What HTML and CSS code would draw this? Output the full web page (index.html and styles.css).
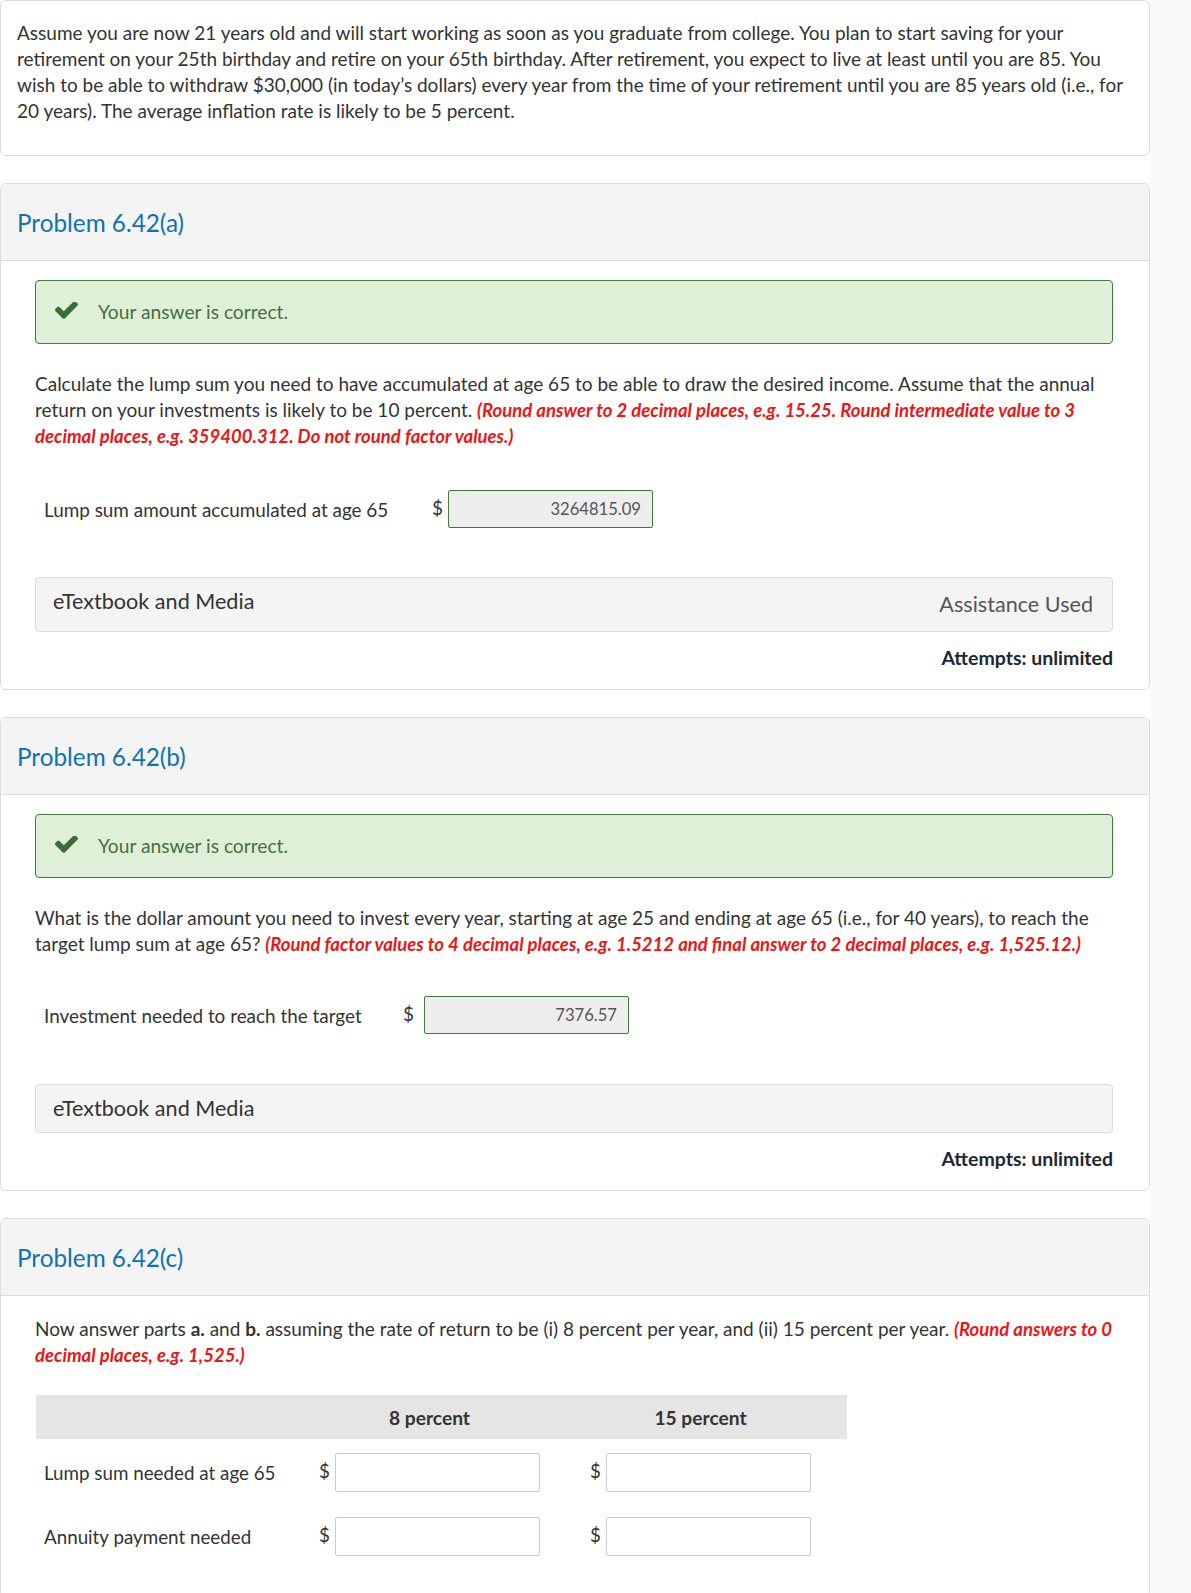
FILE: index.html
```html
<!DOCTYPE html>
<html lang="en">
<head>
<meta charset="utf-8">
<title>Problem 6.42</title>
<link rel="stylesheet" href="styles.css">
</head>
<body>
<div class="page">

  <section class="card intro">
    <p class="text">Assume you are now 21 years old and will start working as soon as you graduate from college. You plan to start saving for your retirement on your 25th birthday and retire on your 65th birthday. After retirement, you expect to live at least until you are 85. You wish to be able to withdraw $30,000 (in today’s dollars) every year from the time of your retirement until you are 85 years old (i.e., for 20 years). The average inflation rate is likely to be 5 percent.</p>
  </section>

  <section class="card">
    <header class="card-head"><h2 class="title">Problem 6.42(a)</h2></header>
    <div class="card-body">
      <div class="success">
        <svg class="check" viewBox="125 400 1546 1125" width="23" height="17" aria-hidden="true"><path fill="#3b6e36" d="M1671 566q0 40-28 68l-724 724-136 136q-28 28-68 28t-68-28l-136-136-362-362q-28-28-28-68t28-68l136-136q28-28 68-28t68 28l294 295 656-657q28-28 68-28t68 28l136 136q28 28 28 68z"/></svg>
        <span>Your answer is correct.</span>
      </div>
      <p class="text question">Calculate the lump sum you need to have accumulated at age 65 to be able to draw the desired income. Assume that the annual return on your investments is likely to be 10 percent. <em class="hint">(Round answer to 2 decimal places, e.g. 15.25. Round intermediate value to 3 decimal places, e.g. 359400.312. Do not round factor values.)</em></p>
      <div class="answer-row row-a">
        <span class="label">Lump sum amount accumulated at age 65</span>
        <span class="dollar">$</span>
        <input class="field answered" type="text" value="3264815.09" readonly>
      </div>
      <div class="media media-tall">
        <span class="media-title">eTextbook and Media</span>
        <span class="assist">Assistance Used</span>
      </div>
      <div class="attempts">Attempts: unlimited</div>
    </div>
  </section>

  <section class="card">
    <header class="card-head"><h2 class="title">Problem 6.42(b)</h2></header>
    <div class="card-body">
      <div class="success">
        <svg class="check" viewBox="125 400 1546 1125" width="23" height="17" aria-hidden="true"><path fill="#3b6e36" d="M1671 566q0 40-28 68l-724 724-136 136q-28 28-68 28t-68-28l-136-136-362-362q-28-28-28-68t28-68l136-136q28-28 68-28t68 28l294 295 656-657q28-28 68-28t68 28l136 136q28 28 28 68z"/></svg>
        <span>Your answer is correct.</span>
      </div>
      <p class="text question">What is the dollar amount you need to invest every year, starting at age 25 and ending at age 65 (i.e., for 40 years), to reach the target lump sum at age 65? <em class="hint">(Round factor values to 4 decimal places, e.g. 1.5212 and final answer to 2 decimal places, e.g. 1,525.12.)</em></p>
      <div class="answer-row row-b">
        <span class="label">Investment needed to reach the target</span>
        <span class="dollar">$</span>
        <input class="field answered" type="text" value="7376.57" readonly>
      </div>
      <div class="media media-short">
        <span class="media-title">eTextbook and Media</span>
      </div>
      <div class="attempts">Attempts: unlimited</div>
    </div>
  </section>

  <section class="card last">
    <header class="card-head"><h2 class="title">Problem 6.42(c)</h2></header>
    <div class="card-body body-c">
      <p class="text">Now answer parts <b>a.</b> and <b>b.</b> assuming the rate of return to be (i) 8 percent per year, and (ii) 15 percent per year. <em class="hint">(Round answers to 0 decimal places, e.g. 1,525.)</em></p>
      <div class="grid-table">
        <div class="grid-head">
          <span></span>
          <span class="col-title">8 percent</span>
          <span class="col-title">15 percent</span>
        </div>
        <div class="grid-row first-row">
          <span class="grid-label">Lump sum needed at age 65</span>
          <span class="cell"><span class="dollar-c">$</span><input class="field empty" type="text"></span>
          <span class="cell"><span class="dollar-c">$</span><input class="field empty" type="text"></span>
        </div>
        <div class="grid-row">
          <span class="grid-label">Annuity payment needed</span>
          <span class="cell"><span class="dollar-c">$</span><input class="field empty" type="text"></span>
          <span class="cell"><span class="dollar-c">$</span><input class="field empty" type="text"></span>
        </div>
      </div>
    </div>
  </section>

</div>
</body>
</html>
```

FILE: styles.css
```css
* { box-sizing: border-box; }

html, body {
  margin: 0;
  padding: 0;
}

body {
  background: #fafafa;
  font-family: Lato, "Open Sans", "Liberation Sans", sans-serif;
  color: #333;
}

.page {
  width: 1150px;
  min-height: 1593px;
  background: #fff;
  overflow: hidden;
}

.card {
  border: 1px solid #dcdcdc;
  border-radius: 6px;
  background: #fff;
  margin-bottom: 27px;
  overflow: hidden;
}

.intro {
  padding: 19px 17px 31px 16px;
  margin-bottom: 27px;
}

.text {
  margin: 0;
  font-size: 19px;
  line-height: 26px;
  color: #333;
}

.card-head {
  background: #f4f4f4;
  border-bottom: 1px solid #dcdcdc;
  padding: 24px 17px 22px 16px;
}

.title {
  margin: 0;
  font-size: 24.3px;
  line-height: 30px;
  font-weight: 400;
  color: #1172b2;
}

.card-body {
  padding: 19px 36px 18px 34px;
}

.success {
  display: flex;
  align-items: center;
  gap: 20px;
  height: 64px;
  padding: 0 18px 0 19px;
  background: #dff0d8;
  border: 1px solid #3f7a3c;
  border-radius: 4px;
  font-size: 19.2px;
  line-height: 26px;
  color: #44703f;
}

.check { flex: none; margin-top: -3px; }

.question { margin-top: 27px; }

.hint {
  color: #ec1616;
  font-weight: 700;
  font-style: italic;
  font-size: 0.975em;
}

.answer-row {
  display: flex;
  align-items: center;
  height: 38px;
  font-size: 18.9px;
}

.row-a { margin-top: 41px; }
.row-b { margin-top: 39px; }

.label {
  padding-left: 9px;
  flex: none;
}

.row-a .label { width: 397px; }
.row-b .label { width: 368px; }

.dollar {
  flex: none;
  margin-top: -4px;
}

.row-a .dollar { width: 16px; }
.row-b .dollar { width: 21px; }

.field {
  width: 205px;
  height: 38px;
  font-family: inherit;
  font-size: 16.6px;
  color: #555;
  text-align: right;
  padding: 0 11px;
  border-radius: 2px;
  outline: none;
}

.answered {
  background: #eee;
  border: 1px solid #3f7a3c;
}

.empty {
  background: #fff;
  border: 1px solid #ccc;
  height: 39px;
}

.media {
  display: flex;
  justify-content: space-between;
  align-items: flex-start;
  background: #f4f4f4;
  border: 1px solid #dcdcdc;
  border-radius: 4px;
  padding: 0 19px 0 17px;
  font-size: 21.6px;
  line-height: 25px;
}

.media-tall { margin-top: 49px; height: 55px; }
.media-short { margin-top: 50px; height: 49px; }

.media-title {
  color: #333;
  padding-top: 11px;
}

.assist {
  color: #555;
  padding-top: 14px;
}

.attempts {
  margin-top: 13px;
  text-align: right;
  font-size: 19.5px;
  line-height: 26px;
  font-weight: 700;
  color: #1d2833;
}

.body-c {
  padding-top: 20px;
  padding-bottom: 40px;
}

.grid-table {
  width: 811px;
  margin-top: 27px;
  margin-left: 1px;
}

.grid-head,
.grid-row {
  display: grid;
  grid-template-columns: 258px 271px 271px;
  padding-right: 11px;
  align-items: center;
}

.grid-head {
  height: 44px;
  background: #e5e5e5;
}

.col-title {
  text-align: center;
  font-size: 19.2px;
  font-weight: 700;
  color: #333;
}

.grid-row {
  margin-top: 25px;
  height: 39px;
  font-size: 18.8px;
}

.first-row { margin-top: 14px; }

.grid-label { padding-left: 8px; }

.cell {
  display: flex;
  align-items: center;
  justify-content: center;
}

.dollar-c {
  width: 16px;
  margin-top: -4px;
}
```
